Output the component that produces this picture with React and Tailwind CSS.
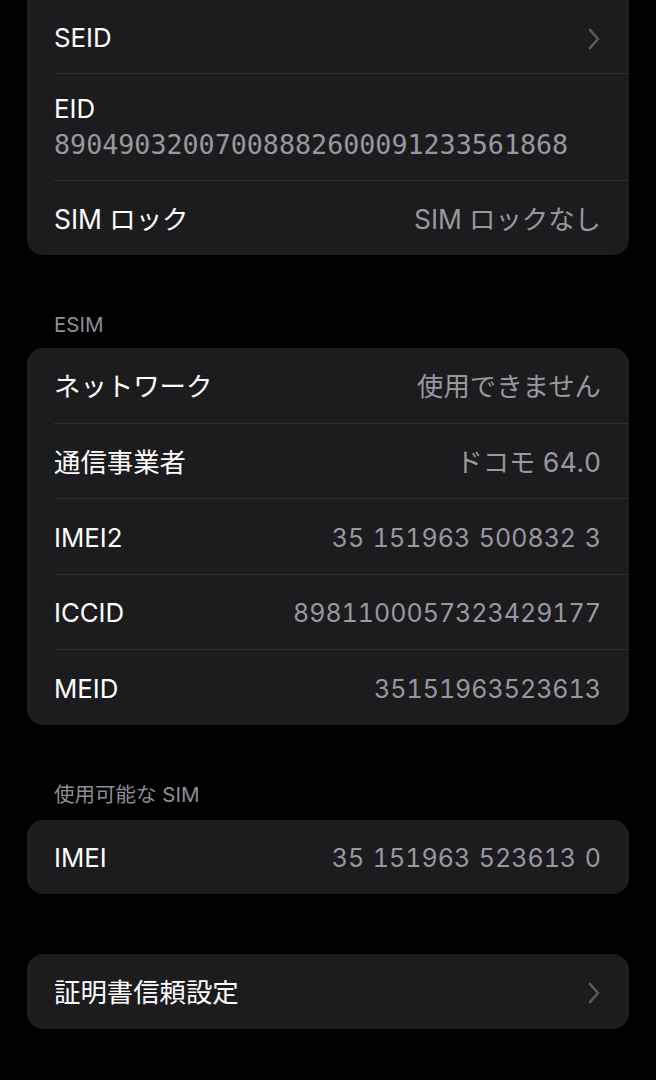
import React from "react";

const font = { fontFamily: '"Inter", "Noto Sans CJK JP", sans-serif' };

function Chevron() {
  return (
    <svg width="14" height="24" viewBox="0 0 14 24" fill="none">
      <polyline points="3,3 11,12 3,21" stroke="#5b5b60" strokeWidth="2.6" strokeLinecap="round" strokeLinejoin="round" />
    </svg>
  );
}

function Divider() {
  return <div className="ml-[27px] h-px bg-[#2f2f32]" />;
}

function Row({ label, value, chevron, h = "h-[74.5px]", jl, jv }) {
  return (
    <div className={`flex ${h} items-center justify-between pl-[27px] pr-[28px] pt-[4px]`}>
      <span className={`${jl ? "text-[26.4px]" : "text-[25.8px]"} text-white`}>{label}</span>
      {chevron ? (
        <Chevron />
      ) : (
        <span className={`${jv ? "text-[26.4px]" : "text-[25px] [word-spacing:2px]"} text-[#98989f] tabular-nums`}>{value}</span>
      )}
    </div>
  );
}

function Header({ children, className }) {
  return (
    <div className={`pl-[54px] text-[20.5px] text-[#8e8e93] ${className}`}>{children}</div>
  );
}

export default function App() {
  return (
    <div className="min-h-[1080px] w-[656px] bg-black" style={font}>
      <div className="mx-[27px] rounded-b-[16px] bg-[#1c1c1e]">
        <Row label="SEID" chevron h="h-[73px]" />
        <Divider />
        <div className="flex h-[106px] flex-col justify-center pl-[27px] pt-[2px]">
          <span className="text-[25.8px] leading-[34px] text-white">EID</span>
          <span
            className="text-[26.7px] leading-[38px] text-[#98989f]"
            style={{ fontFamily: '"DejaVu Sans Mono", monospace', fontWeight: 300 }}
          >
            89049032007008882600091233561868
          </span>
        </div>
        <Divider />
        <Row label="SIM ロック" value="SIM ロックなし" h="h-[74px]" jl jv />
      </div>

      <Header className="mt-[57px] h-[36px] leading-[26px]">ESIM</Header>
      <div className="mx-[27px] rounded-[16px] bg-[#1c1c1e]">
        <Row label="ネットワーク" value="使用できません" jl jv />
        <Divider />
        <Row label="通信事業者" value="ドコモ 64.0" jl jv />
        <Divider />
        <Row label="IMEI2" value="35 151963 500832 3" />
        <Divider />
        <Row label="ICCID" value="8981100057323429177" />
        <Divider />
        <Row label="MEID" value="35151963523613" />
      </div>

      <Header className="mt-[58px] h-[37px] leading-[24px]">使用可能な SIM</Header>
      <div className="mx-[27px] rounded-[16px] bg-[#1c1c1e]">
        <Row label="IMEI" value="35 151963 523613 0" />
      </div>

      <div className="mx-[27px] mt-[60px] rounded-[16px] bg-[#1c1c1e]">
        <Row label="証明書信頼設定" chevron jl />
      </div>
    </div>
  );
}
